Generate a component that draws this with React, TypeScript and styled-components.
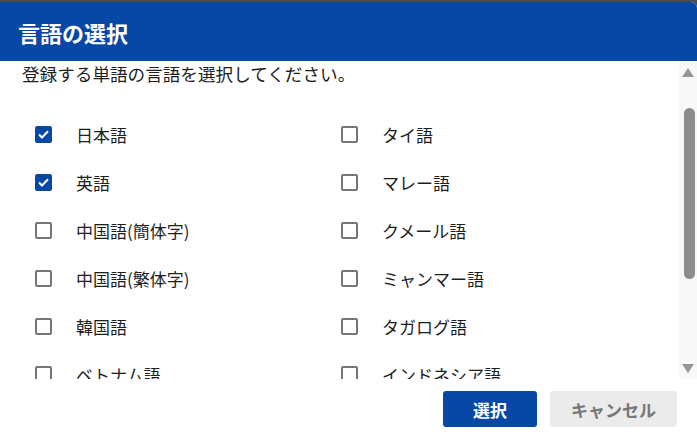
import React from "react";
import styled, { createGlobalStyle } from "styled-components";

const GlobalStyle = createGlobalStyle`
  html, body {
    margin: 0;
    padding: 0;
    background: #4d4d4d;
  }
  body {
    font-family: "Noto Sans CJK JP", "Noto Sans", sans-serif;
  }
`;

const Dialog = styled.div`
  margin-top: 2px;
  width: 697px;
  height: 437px;
  background: #fff;
  border-radius: 0 6px 0 0;
  overflow: hidden;
  display: flex;
  flex-direction: column;
`;

const Header = styled.div`
  height: 59px;
  flex: none;
  background: #0747a6;
  color: #fff;
  display: flex;
  align-items: center;
  padding: 0 18px;
  font-size: 22px;
  font-weight: 700;
`;

const Body = styled.div`
  height: 318px;
  flex: none;
  display: flex;
`;

const Content = styled.div`
  flex: 1;
  overflow: hidden;
`;

const Track = styled.div`
  width: 18px;
  flex: none;
  background: #f8f8f8;
  display: flex;
  flex-direction: column;
  align-items: center;
`;

const Arrow = styled.div<{ $down?: boolean }>`
  height: 22px;
  flex: none;
  display: flex;
  align-items: center;
  justify-content: center;
  margin-top: ${(p) => (p.$down ? "auto" : "0")};
`;

const Thumb = styled.div`
  width: 11px;
  height: 171px;
  margin-top: 25px;
  margin-left: 3px;
  border-radius: 6px;
  background: #8c8c8c;
`;

const Lead = styled.p`
  margin: 0;
  padding: 1px 22px 0;
  font-size: 17.6px;
  line-height: 24px;
  color: #1e1e1e;
`;

const LangGrid = styled.div`
  display: grid;
  grid-template-columns: 306px 306px;
  grid-auto-rows: 48px;
  padding: 24px 0 0 35px;
`;

const Option = styled.label`
  display: flex;
  align-items: center;
  gap: 24px;
  font-size: 17px;
  color: #1e1e1e;
`;

const Box = styled.span<{ $on: boolean }>`
  width: 17px;
  height: 17px;
  box-sizing: border-box;
  border-radius: 2px;
  border: 2px solid ${(p) => (p.$on ? "#0747a6" : "#767676")};
  background: ${(p) => (p.$on ? "#0747a6" : "#fff")};
  display: flex;
  align-items: center;
  justify-content: center;
  flex: none;
`;

const Footer = styled.div`
  flex: 1;
  display: flex;
  justify-content: flex-end;
  align-items: flex-start;
  gap: 13px;
  padding: 12px 20px 0 0;
`;

const Btn = styled.button<{ $primary?: boolean }>`
  height: 36px;
  width: ${(p) => (p.$primary ? "94px" : "127px")};
  border: none;
  border-radius: 3px;
  font-family: inherit;
  font-size: 17px;
  font-weight: 700;
  background: ${(p) => (p.$primary ? "#0747a6" : "#ebebeb")};
  color: ${(p) => (p.$primary ? "#fff" : "#777")};
`;

const langs: [string, boolean][] = [
  ["日本語", true],
  ["タイ語", false],
  ["英語", true],
  ["マレー語", false],
  ["中国語(簡体字)", false],
  ["クメール語", false],
  ["中国語(繁体字)", false],
  ["ミャンマー語", false],
  ["韓国語", false],
  ["タガログ語", false],
  ["ベトナム語", false],
  ["インドネシア語", false],
  ["ポルトガル語", false],
  ["ネパール語", false],
  ["スペイン語", false],
  ["モンゴル語", false],
];

const Check = () => (
  <svg width="11" height="9" viewBox="0 0 11 9">
    <path d="M1 4.5 L4 7.5 L10 1.2" fill="none" stroke="#fff" strokeWidth="2" />
  </svg>
);

const Tri = ({ down }: { down?: boolean }) => (
  <svg width="12" height="9" viewBox="0 0 12 9">
    <path d={down ? "M0 0 H12 L6 9 Z" : "M6 0 L12 9 H0 Z"} fill="#959595" />
  </svg>
);

export default function App() {
  return (
    <>
      <GlobalStyle />
      <Dialog>
        <Header>言語の選択</Header>
        <Body>
          <Content>
            <Lead>登録する単語の言語を選択してください。</Lead>
            <LangGrid>
              {langs.map(([name, on]) => (
                <Option key={name}>
                  <Box $on={on}>{on && <Check />}</Box>
                  {name}
                </Option>
              ))}
            </LangGrid>
          </Content>
          <Track>
            <Arrow>
              <Tri />
            </Arrow>
            <Thumb />
            <Arrow $down>
              <Tri down />
            </Arrow>
          </Track>
        </Body>
        <Footer>
          <Btn $primary>選択</Btn>
          <Btn>キャンセル</Btn>
        </Footer>
      </Dialog>
    </>
  );
}
